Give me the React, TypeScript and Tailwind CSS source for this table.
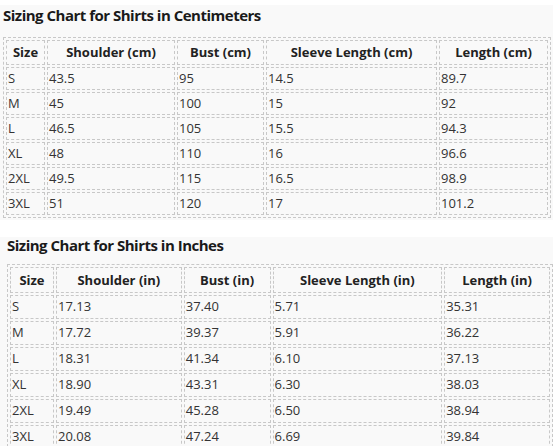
import React from "react";

type Table = {
  title: string;
  headers: string[];
  widths: string[];
  rows: string[][];
};

const cm: Table = {
  title: "Sizing Chart for Shirts in Centimeters",
  headers: ["Size", "Shoulder (cm)", "Bust (cm)", "Sleeve Length (cm)", "Length (cm)"],
  widths: ["w-[39px]", "w-[128px]", "w-[87px]", "w-[171px]", "w-[109px]"],
  rows: [
    ["S", "43.5", "95", "14.5", "89.7"],
    ["M", "45", "100", "15", "92"],
    ["L", "46.5", "105", "15.5", "94.3"],
    ["XL", "48", "110", "16", "96.6"],
    ["2XL", "49.5", "115", "16.5", "98.9"],
    ["3XL", "51", "120", "17", "101.2"],
  ],
};

const inch: Table = {
  title: "Sizing Chart for Shirts in Inches",
  headers: ["Size", "Shoulder (in)", "Bust (in)", "Sleeve Length (in)", "Length (in)"],
  widths: ["w-[44px]", "w-[126px]", "w-[87px]", "w-[170px]", "w-[106px]"],
  rows: [
    ["S", "17.13", "37.40", "5.71", "35.31"],
    ["M", "17.72", "39.37", "5.91", "36.22"],
    ["L", "18.31", "41.34", "6.10", "37.13"],
    ["XL", "18.90", "43.31", "6.30", "38.03"],
    ["2XL", "19.49", "45.28", "6.50", "38.94"],
    ["3XL", "20.08", "47.24", "6.69", "39.84"],
  ],
};

function Chart({ t, headH, rowH }: { t: Table; headH: string; rowH: string }) {
  return (
    <table className="table-fixed border-separate border-spacing-[2px] border border-dashed border-[#c8c8c8]">
      <thead>
        <tr>
          {t.headers.map((h, i) => (
            <th
              key={h}
              className={`${t.widths[i]} ${headH} border border-dashed border-[#c8c8c8] px-1 pb-[1px] text-center text-[13px] leading-[18px] font-bold text-[#222]`}
            >
              {h}
            </th>
          ))}
        </tr>
      </thead>
      <tbody>
        {t.rows.map((r) => (
          <tr key={r[0]}>
            {r.map((c, i) => (
              <td
                key={i}
                className={`${rowH} border border-dashed border-[#c8c8c8] px-[1px] pb-[2px] text-left text-[13px] leading-[18px] text-[#333]`}
              >
                {c}
              </td>
            ))}
          </tr>
        ))}
      </tbody>
    </table>
  );
}

export default function App() {
  return (
    <div
      className="min-h-[446px] bg-white pt-[5px]"
      style={{ fontFamily: '"Open Sans", "Noto Sans", sans-serif' }}
    >
      <section className="bg-[#f9f9f9] pl-[3px] pb-[2px]">
        <h2 className="h-[32px] text-[15px] font-bold leading-[20px] text-[#1a1a1a] tracking-[-0.5px]">
          {cm.title}
        </h2>
        <Chart t={cm} headH="h-[25px]" rowH="h-[23px]" />
      </section>
      <section className="mt-[17px] bg-[#f9f9f9] pl-[7px] pb-[4px]">
        <h2 className="h-[27px] text-[15px] font-bold leading-[16px] text-[#1a1a1a] tracking-[-0.5px]">
          {inch.title}
        </h2>
        <Chart t={inch} headH="h-[26px]" rowH="h-[24px]" />
      </section>
    </div>
  );
}
